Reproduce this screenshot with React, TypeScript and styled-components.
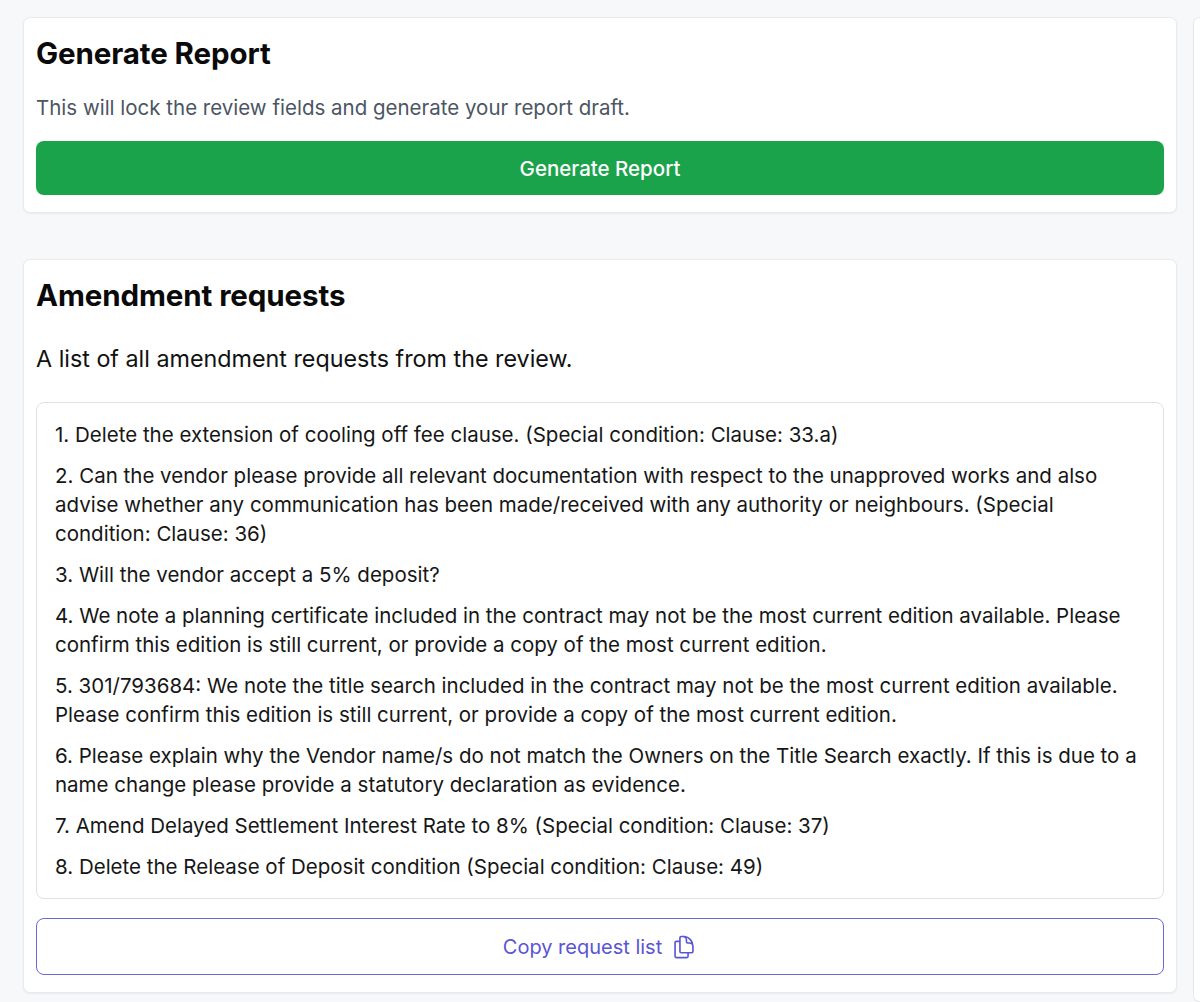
import React from "react";
import styled, { createGlobalStyle } from "styled-components";
import { HiOutlineDocumentDuplicate } from "react-icons/hi2";

const GlobalStyle = createGlobalStyle`
  html, body {
    margin: 0;
    padding: 0;
    background: #f7f8fa;
    font-family: Inter, "Noto Sans", "Liberation Sans", sans-serif;
    color: #111827;
  }
  * { box-sizing: border-box; }
`;

const Page = styled.div`
  display: grid;
  grid-template-columns: 1154px 1fr;
  column-gap: 16px;
  padding: 17px 0 0 23px;
  height: 1002px;
  overflow: hidden;
`;

const Main = styled.div`
  display: flex;
  flex-direction: column;
  gap: 46px;
`;

const SidePanel = styled.div`
  background: #ffffff;
  border: 1px solid #e5e7eb;
  border-right: none;
  border-radius: 6px 0 0 6px;
`;

const Card = styled.section`
  background: #ffffff;
  border: 1px solid #e8eaed;
  border-radius: 7px;
  box-shadow: 0 1px 2px rgba(16, 24, 40, 0.06);
  padding: 17px 12px 17px 12px;
  display: flex;
  flex-direction: column;
`;

const Title = styled.h2`
  margin: 0;
  font-size: 29.5px;
  line-height: 36px;
  font-weight: 700;
  color: #0a0a0a;
  letter-spacing: -0.1px;
`;

const Subtitle = styled.p<{ $muted?: boolean; $top: number; $size: number }>`
  margin: ${(p) => p.$top}px 0 0 0;
  font-size: ${(p) => p.$size}px;
  line-height: 30px;
  color: ${(p) => (p.$muted ? "#4b5563" : "#111111")};
`;

const PrimaryButton = styled.button`
  margin-top: 18px;
  width: 100%;
  height: 54px;
  border: none;
  border-radius: 8px;
  background: #1ba34b;
  color: #ffffff;
  font-family: inherit;
  font-size: 20.5px;
  font-weight: 500;
  cursor: pointer;
`;

const ListBox = styled.div`
  margin-top: 28px;
  border: 1px solid #dfe1e5;
  border-radius: 8px;
  padding: 17px 18px 17px 18px;
  display: flex;
  flex-direction: column;
  gap: 12px;
`;

const Item = styled.p`
  margin: 0;
  font-size: 20.5px;
  line-height: 29px;
  color: #161616;
`;

const OutlineButton = styled.button`
  margin-top: 19px;
  width: 100%;
  height: 57px;
  border: 1.5px solid #6b66e0;
  border-radius: 8px;
  background: #ffffff;
  color: #5a54d6;
  font-family: inherit;
  font-size: 20px;
  font-weight: 400;
  display: flex;
  align-items: center;
  justify-content: center;
  gap: 9px;
  cursor: pointer;
  svg {
    width: 26px;
    height: 26px;
  }
`;

const items = [
  "Delete the extension of cooling off fee clause. (Special condition: Clause: 33.a)",
  "Can the vendor please provide all relevant documentation with respect to the unapproved works and also advise whether any communication has been made/received with any authority or neighbours. (Special condition: Clause: 36)",
  "Will the vendor accept a 5% deposit?",
  "We note a planning certificate included in the contract may not be the most current edition available. Please confirm this edition is still current, or provide a copy of the most current edition.",
  "301/793684: We note the title search included in the contract may not be the most current edition available. Please confirm this edition is still current, or provide a copy of the most current edition.",
  "Please explain why the Vendor name/s do not match the Owners on the Title Search exactly. If this is due to a name change please provide a statutory declaration as evidence.",
  "Amend Delayed Settlement Interest Rate to 8% (Special condition: Clause: 37)",
  "Delete the Release of Deposit condition (Special condition: Clause: 49)",
];

export default function App() {
  return (
    <>
      <GlobalStyle />
      <Page>
        <Main>
          <Card>
            <Title>Generate Report</Title>
            <Subtitle $muted $top={22} $size={20.5}>
              This will lock the review fields and generate your report draft.
            </Subtitle>
            <PrimaryButton>Generate Report</PrimaryButton>
          </Card>
          <Card>
            <Title>Amendment requests</Title>
            <Subtitle $top={31} $size={23.3}>
              A list of all amendment requests from the review.
            </Subtitle>
            <ListBox>
              {items.map((t, i) => (
                <Item key={i}>
                  {i + 1}. {t}
                </Item>
              ))}
            </ListBox>
            <OutlineButton>
              Copy request list
              <HiOutlineDocumentDuplicate />
            </OutlineButton>
          </Card>
        </Main>
        <SidePanel />
      </Page>
    </>
  );
}
